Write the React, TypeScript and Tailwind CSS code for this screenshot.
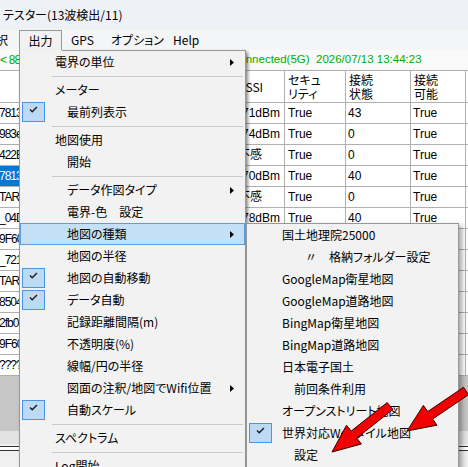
import React from "react";

type Row = {
  label?: string;
  sep?: boolean;
  pad?: "a" | "b" | "c";
  checked?: boolean;
  sub?: boolean;
  active?: boolean;
};

const mainMenu: Row[] = [
  { label: "電界の単位", sub: true },
  { sep: true },
  { label: "メーター" },
  { label: "最前列表示", pad: "b", checked: true },
  { sep: true },
  { label: "地図使用" },
  { label: "開始", pad: "b" },
  { sep: true },
  { label: "データ作図タイプ", pad: "b", sub: true },
  { label: "電界-色　設定", pad: "b" },
  { label: "地図の種類", pad: "b", sub: true, active: true },
  { label: "地図の半径", pad: "b" },
  { label: "地図の自動移動", pad: "b", checked: true },
  { label: "データ自動", pad: "b", checked: true },
  { label: "記録距離間隔(m)", pad: "b" },
  { label: "不透明度(%)", pad: "b" },
  { label: "線幅/円の半径", pad: "b" },
  { label: "図面の注釈/地図でWifi位置", pad: "b", sub: true },
  { label: "自動スケール", pad: "b", checked: true },
  { sep: true },
  { label: "スペクトラム" },
  { sep: true },
  { label: "Log開始" },
];

const mapMenu: Row[] = [
  { label: "国土地理院25000" },
  { label: "〃　格納フォルダー設定", pad: "c" },
  { label: "GoogleMap衛星地図" },
  { label: "GoogleMap道路地図" },
  { label: "BingMap衛星地図" },
  { label: "BingMap道路地図" },
  { label: "日本電子国土" },
  { label: "前回条件利用", pad: "b" },
  { label: "オープンストリート地図" },
  { label: "世界対応Webタイル地図", checked: true },
  { label: "設定", pad: "b" },
];

const ids = ["7813", "983e", "422B", "7813", "TAR", "_04D", "9F60", "_721", "TAR", "8504", "2fb0", "9F60", "????"];
const rssi = ["-71dBm", "-74dBm", "不感", "-70dBm", "不感", "-78dBm", "-81dBm", "不感", "-84dBm", "-86dBm", "不感", "-88dBm", "-90dBm"];
const state = ["43", "0", "0", "40", "0", "40", "0", "0", "40", "0", "0", "0", "0"];

const cols = ["w-[120px]", "w-[115px]", "w-[50px]", "w-[61px]", "w-[65px]", "w-[55px]", "w-[80px]"];

function Check() {
  return (
    <div className="ml-[1px] w-[23px] h-[20px] border border-[#4a94e2] bg-[#bcdaf4] relative">
      <svg width="9" height="7" viewBox="0 0 9 7" className="absolute left-[6px] top-[3px]">
        <path d="M1 3.5L3.2 5.7L8 1" fill="none" stroke="#1a1a1a" strokeWidth="1.4" />
      </svg>
    </div>
  );
}

function Item({ row }: { row: Row }) {
  if (row.sep) {
    return (
      <div className="h-[6px] flex items-center">
        <div className="ml-[32px] mr-[2px] flex-1 h-px bg-[#cacaca]" />
      </div>
    );
  }
  const pad = row.pad === "c" ? "pl-[27px]" : row.pad === "b" ? "pl-[16px]" : "pl-[4px]";
  return (
    <div
      className={
        "h-[22px] flex items-center border " +
        (row.active ? "border-[#5b9fe3] bg-[#c4e0f7]" : "border-transparent")
      }
    >
      <div className="w-[30px] h-[20px] shrink-0">{row.checked && <Check />}</div>
      <span className={"whitespace-pre " + pad}>{row.label}</span>
      {row.sub && (
        <svg width="4" height="7" viewBox="0 0 4 7" className="ml-auto mr-[10px]">
          <path d="M0 0L4 3.5L0 7Z" fill="#000" />
        </svg>
      )}
    </div>
  );
}

function arrow(tx: number, ty: number, px: number, py: number) {
  const dx = px - tx;
  const dy = py - ty;
  const len = Math.hypot(dx, dy);
  const ux = dx / len;
  const uy = dy / len;
  const nx = -uy;
  const ny = ux;
  const sw = 4.5;
  const hw = 12;
  const hl = 28;
  const bx = px - ux * hl;
  const by = py - uy * hl;
  const p = [
    [tx + nx * sw, ty + ny * sw],
    [bx + nx * sw, by + ny * sw],
    [bx + nx * hw, by + ny * hw],
    [px, py],
    [bx - nx * hw, by - ny * hw],
    [bx - nx * sw, by - ny * sw],
    [tx - nx * sw, ty - ny * sw],
  ];
  return p.map((q) => q[0].toFixed(1) + "," + q[1].toFixed(1)).join(" ");
}

export default function App() {
  return (
    <div className="relative w-[468px] h-[467px] overflow-hidden bg-[#f0f0f0] text-[12px] text-black font-['Noto_Sans_CJK_JP',sans-serif] [font-feature-settings:'palt']">
      {/* title */}
      <div className="h-[29px] bg-[#eef2f7] flex items-center pl-[3px]">テスター(13波検出/11)</div>

      {/* menubar */}
      <div className="h-[21px] bg-[#f4f5f7] flex items-stretch">
        <div className="w-[19px] overflow-hidden flex items-center">
          <span className="-ml-[4px]">択</span>
        </div>
        <div className="w-[43px] mt-[1px] border border-b-0 border-[#979797] bg-[#f2f2f2] flex items-center justify-center">
          出力
        </div>
        <div className="w-[40px] pl-[9px] flex items-center">GPS</div>
        <div className="w-[62px] pl-[9px] flex items-center">オプション</div>
        <div className="pl-[9px] flex items-center">Help</div>
      </div>

      {/* status line */}
      <div className="h-[20px] bg-[#f9f9f9] flex items-center text-[#00b000] font-['Liberation_Sans',sans-serif] whitespace-pre">
        <div className="w-[231px] tracking-[-0.8px]">{"< 88"}</div>
        <span className="text-[11.5px]">{"Connected(5G)  2026/07/13 13:44:23"}</span>
      </div>

      {/* grid */}
      <div className="bg-white font-['Liberation_Sans','Noto_Sans_CJK_JP',sans-serif] border-t border-[#b0b0b0]">
        <div className="flex h-[32px]">
          {["", "", "RSSI", "セキュ\nリティ", "接続\n状態", "接続\n可能", ""].map((h, i) => (
            <div
              key={i}
              className={
                cols[i] +
                " shrink-0 border-r border-b border-[#b0b0b0] px-[3px] flex items-center whitespace-pre-line leading-[14px] font-['Noto_Sans_CJK_JP',sans-serif]"
              }
            >
              {h}
            </div>
          ))}
        </div>
        {ids.map((id, r) => (
          <div key={r} className="flex h-[21px]">
            <div
              className={
                cols[0] +
                " shrink-0 border-r border-b border-[#b0b0b0] flex items-center tracking-[-1px] " +
                (r === 3 ? "bg-[#0078d7] text-white" : "")
              }
            >
              <span className="-ml-[1px]">{id}</span>
            </div>
            <div className={cols[1] + " shrink-0 border-r border-b border-[#b0b0b0]"} />
            <div className={cols[2] + " shrink-0 border-r border-b border-[#b0b0b0] px-[3px] flex items-center whitespace-nowrap"}>
              {rssi[r]}
            </div>
            <div className={cols[3] + " shrink-0 border-r border-b border-[#b0b0b0] px-[3px] flex items-center"}>True</div>
            <div className={cols[4] + " shrink-0 border-r border-b border-[#b0b0b0] px-[2px] flex items-center"}>{state[r]}</div>
            <div className={cols[5] + " shrink-0 border-r border-b border-[#b0b0b0] px-[2px] flex items-center"}>True</div>
            <div className={cols[6] + " shrink-0 border-r border-b border-[#b0b0b0]"} />
          </div>
        ))}
      </div>
      <div className="h-[55px] bg-[#c6c6c6]" />
      <div className="h-[13px] bg-[#e3e3e3]" />
      <div className="h-px mt-[2px] bg-[#333]" />
      <div className="h-[3px] bg-white" />
      <div className="h-px bg-[#333]" />

      {/* 出力 dropdown */}
      <div className="absolute left-[19px] top-[50px] w-[227px] h-[430px] bg-[#f2f2f2] border-x border-[#979797] shadow-[2px_2px_3px_rgba(0,0,0,0.45)]">
        <div className="flex h-px">
          <div className="w-[42px]" />
          <div className="flex-1 bg-[#979797]" />
        </div>
        {mainMenu.map((row, i) => (
          <Item key={i} row={row} />
        ))}
      </div>

      {/* 地図の種類 submenu */}
      <div className="absolute left-[246px] top-[223px] w-[213px] h-[260px] bg-[#f2f2f2] border border-[#979797] shadow-[3px_3px_5px_rgba(0,0,0,0.35)]">
        {mapMenu.map((row, i) => (
          <Item key={i} row={row} />
        ))}
      </div>

      {/* red arrows */}
      <svg className="absolute left-0 top-0" width="468" height="467" viewBox="0 0 468 467">
        <polygon points={arrow(390, 406, 332, 452)} fill="#f00000" stroke="#3a0000" strokeWidth="1" />
        <polygon points={arrow(466, 391, 407, 431)} fill="#f00000" stroke="#3a0000" strokeWidth="1" />
      </svg>
    </div>
  );
}
